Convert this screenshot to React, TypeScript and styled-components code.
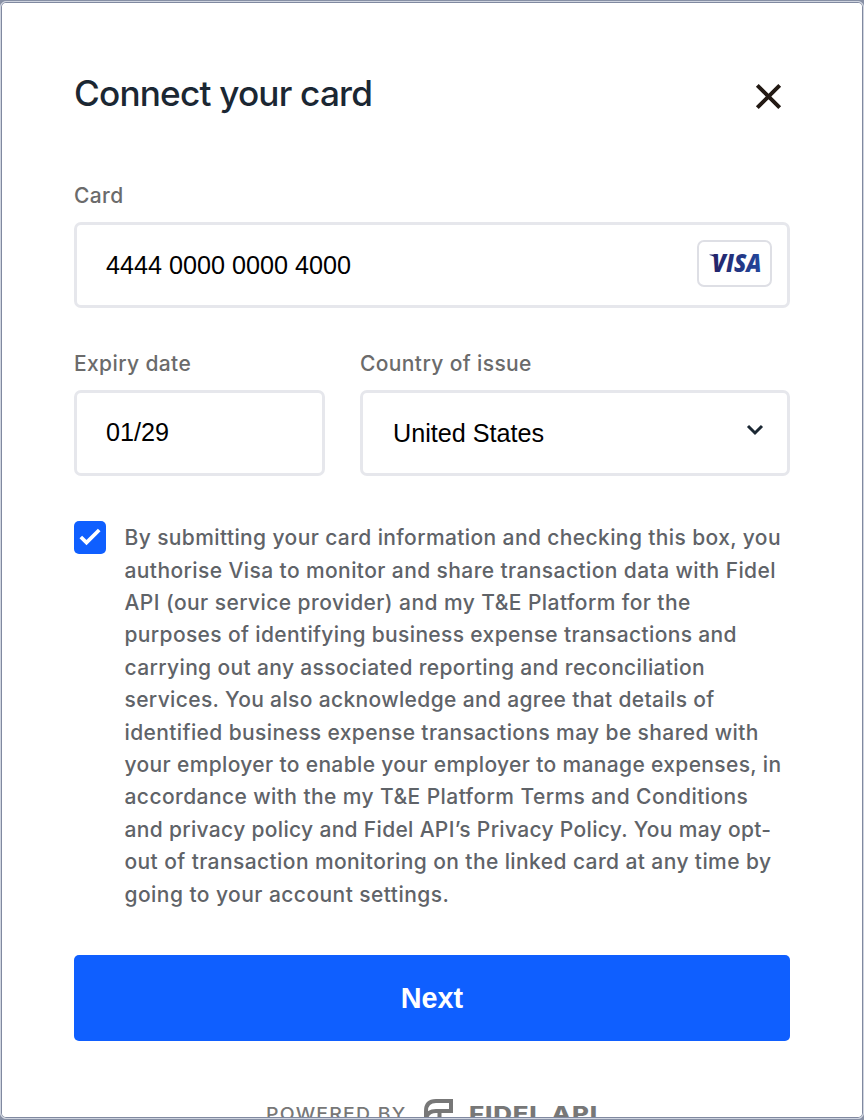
import React from "react";
import styled, { createGlobalStyle } from "styled-components";

const Global = createGlobalStyle`
  * { box-sizing: border-box; }
  html, body { margin: 0; padding: 0; background: #8790a5; }
  body { font-family: Inter, "Liberation Sans", sans-serif; overflow: hidden; }
`;

const Backdrop = styled.div`
  height: 1120px;
  padding: 1px 0;
  background: #8790a5;
`;

const Dialog = styled.main`
  height: 1118px;
  border: 1px solid #cfd4df;
  border-radius: 6px;
  box-shadow: inset 0 0 0 1px #8089a0;
  background: #fff;
  padding: 1px;
  overflow: hidden;
`;

const Content = styled.div`
  height: 1114px;
  padding: 70px 72px 0;
  overflow: hidden;
  background: #fff;
  border-radius: 5px;
`;

const Header = styled.header`
  display: flex;
  justify-content: space-between;
  align-items: flex-start;
  height: 107px;
`;

const Title = styled.h1`
  margin: 0;
  font-size: 35.2px;
  line-height: 40px;
  font-weight: 500;
  letter-spacing: -0.82px;
  color: #1b2733;
`;

const CloseButton = styled.button`
  margin: 10px 8px 0 0;
  padding: 0;
  border: 0;
  background: none;
  width: 27px;
  height: 27px;
  svg { display: block; }
`;

const Row = styled.div`
  display: grid;
  grid-template-columns: 251px 430px;
  gap: 35px;
  margin-top: 40px;
`;

const Field = styled.div`
  display: flex;
  flex-direction: column;
`;

const Label = styled.label`
  height: 42px;
  font-size: 21px;
  line-height: 32px;
  font-weight: 450;
  letter-spacing: 0.38px;
  color: #6b6b6b;
`;

const Control = styled.div<{ $left?: number; $lift?: number }>`
  display: flex;
  align-items: center;
  justify-content: space-between;
  height: 86px;
  padding: 0 15px ${(p) => p.$lift ?? 0}px ${(p) => p.$left ?? 29}px;
  border: 3px solid #e6e7ec;
  border-radius: 7px;
  font-family: "Liberation Sans", Arial, sans-serif;
  font-size: 25.2px;
  color: #000;
`;

const CardBadge = styled.span`
  display: flex;
  width: 75px;
  height: 47px;
  margin-top: -4px;
  border: 2px solid #dedfe5;
  border-radius: 7px;
  align-items: center;
  justify-content: center;
`;

const Chevron = styled.svg`
  display: block;
  margin: -7px 8px 0 0;
`;

const Consent = styled.div`
  display: flex;
  gap: 18.5px;
  margin-top: 45px;
`;

const Checkbox = styled.span`
  flex: none;
  width: 32px;
  height: 33px;
  border-radius: 5px;
  background: #0f5fff;
`;

const Terms = styled.p`
  height: 388.8px;
  margin: 1.2px 0 0;
  font-size: 21px;
  line-height: 32.4px;
  font-weight: 450;
  color: #5f6368;
  white-space: nowrap;
`;

const TermsLine = styled.span<{ $tracking: number }>`
  display: block;
  letter-spacing: ${(p) => p.$tracking}px;
`;

const NextButton = styled.button`
  display: block;
  width: 716px;
  height: 86px;
  margin: 44px 0 0;
  padding: 1px 0 0;
  border: 0;
  border-radius: 5px;
  background: #0f5fff;
  color: #fff;
  font: bold 28.8px "Liberation Sans", Arial, sans-serif;
`;

const Footer = styled.footer`
  display: flex;
  justify-content: center;
  align-items: flex-start;
  margin-top: 58px;
  color: #777;
`;

const Powered = styled.span`
  width: 139px;
  margin-top: 4px;
  font-size: 17.5px;
  line-height: 22px;
  letter-spacing: 1.1px;
  font-weight: 500;
  white-space: nowrap;
  transform: scaleX(1.11);
  transform-origin: left;
`;

const Mark = styled.svg`
  flex: none;
  margin: 0 16.5px 0 18.5px;
`;

const Brand = styled.span`
  width: 129px;
  margin-top: 4px;
  font-size: 19.5px;
  line-height: 22px;
  letter-spacing: 0.6px;
  font-weight: 800;
  white-space: nowrap;
  transform: scaleX(1.33);
  transform-origin: left;
`;

const terms: [string, number][] = [
  ["By submitting your card information and checking this box, you", 0.387],
  ["authorise Visa to monitor and share transaction data with Fidel", 0.404],
  ["API (our service provider) and my T&E Platform for the", 0.432],
  ["purposes of identifying business expense transactions and", 0.355],
  ["carrying out any associated reporting and reconciliation", 0.362],
  ["services. You also acknowledge and agree that details of", 0.353],
  ["identified business expense transactions may be shared with", 0.384],
  ["your employer to enable your employer to manage expenses, in", 0.352],
  ["accordance with the my T&E Platform Terms and Conditions", 0.415],
  ["and privacy policy and Fidel API’s Privacy Policy. You may opt-", 0.325],
  ["out of transaction monitoring on the linked card at any time by", 0.404],
  ["going to your account settings.", 0.444],
];

function VisaLogo() {
  return (
    <svg width="54" height="22" viewBox="0 0 54 22" overflow="visible">
      <defs>
        <linearGradient id="visa" gradientUnits="userSpaceOnUse" x1="0" y1="0" x2="54" y2="0">
          <stop offset="0" stopColor="#241f63" />
          <stop offset="1" stopColor="#23489d" />
        </linearGradient>
      </defs>
      <path d="M1.5 2.4H8L9 8Q6.5 4.2 1.5 3Z" fill="url(#visa)" />
      <text
        x="4"
        y="20.4"
        fill="url(#visa)"
        fontFamily="Open Sans"
        fontWeight="800"
        fontStyle="italic"
        fontSize="24.8"
        textLength="49.5"
        lengthAdjust="spacingAndGlyphs"
      >
        VISA
      </text>
    </svg>
  );
}

export default function App() {
  return (
    <>
      <Global />
      <Backdrop>
        <Dialog>
          <Content>
            <Header>
              <Title>Connect your card</Title>
              <CloseButton aria-label="Close">
                <svg width="27" height="27" viewBox="0 0 27 27" fill="none" stroke="#231a14" strokeWidth="4">
                  <path d="M2.3 2.3L24.7 24.7M24.7 2.3L2.3 24.7" />
                </svg>
              </CloseButton>
            </Header>
            <Field>
              <Label>Card</Label>
              <Control>
                4444 0000 0000 4000
                <CardBadge><VisaLogo /></CardBadge>
              </Control>
            </Field>
            <Row>
              <Field>
                <Label>Expiry date</Label>
                <Control $lift={2}>01/29</Control>
              </Field>
              <Field>
                <Label>Country of issue</Label>
                <Control $left={30}>
                  United States
                  <Chevron width="18" height="12" viewBox="0 0 18 12" fill="none" stroke="#1b2733" strokeWidth="3">
                    <path d="M2 2L9 9L16 2" />
                  </Chevron>
                </Control>
              </Field>
            </Row>
            <Consent>
              <Checkbox>
                <svg width="32" height="33" viewBox="0 0 32 33" fill="none" stroke="#fff" strokeWidth="3.8">
                  <path d="M6.8 16L12.5 21.5L25.2 9" />
                </svg>
              </Checkbox>
              <Terms>
                {terms.map(([line, tracking]) => (
                  <TermsLine key={line} $tracking={tracking}>{line}</TermsLine>
                ))}
              </Terms>
            </Consent>
            <NextButton>Next</NextButton>
            <Footer>
              <Powered>POWERED BY</Powered>
              <Mark width="29" height="26" viewBox="0 0 29 26" fill="none" stroke="#777" strokeWidth="4">
                <path d="M2 26V12Q2 2 12 2H27V12H12Q2 12 2 22M15.5 12V26" />
              </Mark>
              <Brand>FIDEL API</Brand>
            </Footer>
          </Content>
        </Dialog>
      </Backdrop>
    </>
  );
}
